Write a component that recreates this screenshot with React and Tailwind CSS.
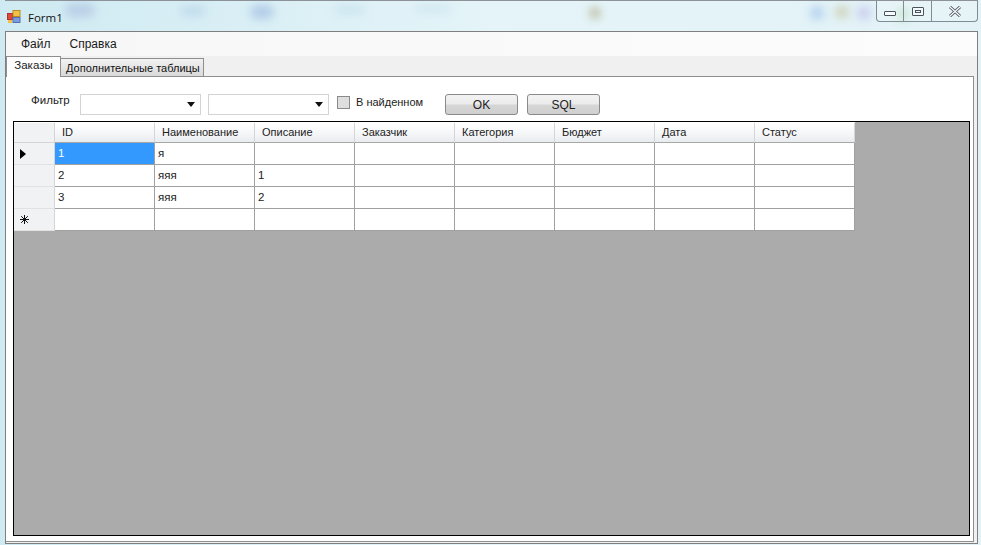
import React from "react";

const columns = ["ID", "Наименование", "Описание", "Заказчик", "Категория", "Бюджет", "Дата", "Статус"];

const rows = [
  { marker: "arrow", cells: ["1", "я", "", "", "", "", "", ""] },
  { marker: "", cells: ["2", "яяя", "1", "", "", "", "", ""] },
  { marker: "", cells: ["3", "яяя", "2", "", "", "", "", ""] },
  { marker: "star", cells: ["", "", "", "", "", "", "", ""] },
];

// Blurred desktop showing through the glass title bar
const blobs = [
  "left-[65px] top-[3px] w-[30px] h-[14px] bg-[#b4c8e4]",
  "left-[180px] top-[6px] w-[26px] h-[10px] bg-[#bcd6ea]",
  "left-[250px] top-[5px] w-[24px] h-[14px] bg-[#a9c4e6]",
  "left-[335px] top-[6px] w-[30px] h-[8px] bg-[#c6e0ee]",
  "left-[415px] top-[6px] w-[36px] h-[6px] bg-[#c6e0ee]",
  "left-[590px] top-[8px] w-[10px] h-[10px] bg-[#a89a70]",
  "left-[810px] top-[6px] w-[14px] h-[14px] bg-[#a9c8ee]",
  "left-[835px] top-[6px] w-[14px] h-[12px] bg-[#c8c8a8]",
  "left-[857px] top-[6px] w-[14px] h-[14px] bg-[#c4c4ee]",
  "left-[899px] top-[8px] w-[8px] h-[12px] bg-[#a4d4a0]",
];

const ComboBox = ({ className }) => (
  <div className={`h-[21px] w-[121px] border border-[#d4d4d4] bg-white flex items-center justify-end pr-[5px] ${className}`}>
    <svg width="8" height="5" viewBox="0 0 8 5">
      <path d="M0 0h8L4 5z" fill="#111" />
    </svg>
  </div>
);

const Button = ({ label, className }) => (
  <div className={`h-[21px] w-[73px] rounded-[3px] border border-[#8a8a8a] bg-[linear-gradient(#f3f3f3_0%,#ebebeb_48%,#d6d6d6_52%,#cfcfcf_100%)] flex items-center justify-center text-[12px] text-[#222] ${className}`}>
    {label}
  </div>
);

const RowMarker = ({ type }) => {
  if (type === "arrow") {
    return (
      <svg width="6" height="10" viewBox="0 0 6 10">
        <path d="M0 0l6 5-6 5z" fill="#000" />
      </svg>
    );
  }
  if (type === "star") {
    return (
      <svg width="9" height="9" viewBox="0 0 9 9" stroke="#111" strokeWidth="1">
        <path d="M4.5 0v9M0 4.5h9M1.2 1.2l6.6 6.6M7.8 1.2L1.2 7.8" />
      </svg>
    );
  }
  return null;
};

const App = () => {
  return (
    <div className="relative w-[981px] h-[545px] overflow-hidden flex flex-col pl-[5px] pr-[3px] bg-[linear-gradient(90deg,#cfeaf2,#e4f4f8_50%,#e2f2f6)] font-['Liberation_Sans',sans-serif] text-[11px] text-[#222]">
      {blobs.map((b) => (
        <div key={b} className={`absolute rounded-full blur-[5px] opacity-80 ${b}`} />
      ))}

      {/* Title bar */}
      <div className="relative h-[31px] shrink-0 flex items-start border-t border-[#8d9298]">
        <svg className="mt-[9px] ml-[2px]" width="14" height="14" viewBox="0 0 14 14">
          <rect x="0.5" y="3.5" width="5" height="6" fill="#e2473a" stroke="#a33" />
          <rect x="6" y="0.5" width="7" height="6" fill="#f2c14a" stroke="#b88a20" />
          <rect x="6" y="7.5" width="7" height="5" fill="#7c9ce0" stroke="#5570b0" />
          <rect x="1" y="10" width="4" height="3" fill="#f2c14a" />
        </svg>
        <span className="ml-[7px] mt-[9px] text-[11.5px] leading-[16px] font-['Open_Sans',sans-serif] text-[#111]">Form1</span>

        {/* Caption buttons */}
        <div className="ml-auto flex h-[21px] w-[102px] rounded-b-[4px] border border-t-0 border-[#7f8b95] bg-white/20">
          <div className="w-[27px] border-r border-[#7f8b95] flex items-center justify-center">
            <div className="mt-[4px] h-[5px] w-[12px] border border-[#49535c] bg-white/70 rounded-[1px]" />
          </div>
          <div className="w-[28px] border-r border-[#7f8b95] flex items-center justify-center">
            <div className="h-[9px] w-[12px] border border-[#49535c] bg-white/50 rounded-[1px] flex items-center justify-center">
              <div className="h-[3px] w-[6px] border border-[#49535c]" />
            </div>
          </div>
          <div className="flex-1 flex items-center justify-center">
            <svg width="12" height="11" viewBox="0 0 12 11">
              <path d="M1 1l10 9M11 1L1 10" stroke="#49535c" strokeWidth="3" />
              <path d="M1 1l10 9M11 1L1 10" stroke="#fff" strokeWidth="1.2" />
            </svg>
          </div>
        </div>
      </div>

      {/* Client area */}
      <div className="h-[513px] shrink-0 flex flex-col border border-[#7f7f7f] bg-[#f0f0f0]">
        {/* Menu */}
        <div className="h-[24px] shrink-0 flex items-center pl-[15px] gap-[19px] bg-[linear-gradient(90deg,#f7f7f7,#fcfcfc)] text-[12px] text-[#1a1a1a]">
          <span>Файл</span>
          <span>Справка</span>
        </div>

        {/* Tabs */}
        <div className="h-[21px] shrink-0 flex items-end relative z-10 mb-[-1px]">
          <div className="h-[21px] w-[55px] border border-b-0 border-[#8e8e8e] bg-white text-center leading-[17px] text-[11.5px] text-[#222]">Заказы</div>
          <div className="h-[19px] w-[143px] border border-l-0 border-[#8e8e8e] bg-[linear-gradient(#f2f2f2,#d9d9d9)] pl-[5px] leading-[18px] text-[11px] text-[#111] whitespace-nowrap">Дополнительные таблицы</div>
        </div>

        {/* Tab page */}
        <div className="flex-1 min-h-0 flex flex-col border-t border-r border-b border-[#8e8e8e] bg-white mb-[1px] mr-[3px]">
          {/* Filter bar */}
          <div className="h-[44px] shrink-0 flex items-start">
            <span className="ml-[25px] mt-[16px] text-[11.5px] leading-[14px] w-[49px]">Фильтр</span>
            <ComboBox className="mt-[17px]" />
            <ComboBox className="mt-[17px] ml-[7px]" />
            <div className="mt-[19px] ml-[8px] h-[13px] w-[13px] border border-[#8a8a8a] bg-[#dedede]" />
            <span className="mt-[18px] ml-[6px] w-[65px] text-[11px] leading-[14px] whitespace-nowrap">В найденном</span>
            <Button label="OK" className="mt-[17px] ml-[24px]" />
            <Button label="SQL" className="mt-[17px] ml-[9px]" />
          </div>

          {/* Data grid */}
          <div className="flex-1 min-h-0 ml-[7px] mr-[3px] mb-[5px] border border-black bg-[#ababab]">
            <div className="w-[841px] bg-white pt-[1px]">
              <div className="flex h-[20px]">
                <div className="w-[41px] shrink-0 border-r border-b border-[#d5d5d5] bg-[#f1f2f4]" />
                {columns.map((c) => (
                  <div key={c} className="w-[100px] shrink-0 border-r border-b border-r-[#d5d5d5] border-b-[#a8a8a8] bg-[linear-gradient(#ffffff,#f6f7f9_50%,#e9ecef)] pl-[7px] text-[11px] leading-[19px] text-[#222]">
                    {c}
                  </div>
                ))}
              </div>
              {rows.map((row, i) => (
                <div key={i} className="flex h-[22px]">
                  <div className="w-[41px] shrink-0 border-r border-b border-r-[#d5d5d5] border-b-[#e2e2e2] bg-[#f1f2f4] flex items-center pl-[6px]">
                    <RowMarker type={row.marker} />
                  </div>
                  {row.cells.map((cell, j) => (
                    <div
                      key={j}
                      className={`w-[100px] shrink-0 border-r border-b border-[#a0a0a0] pl-[3px] leading-[21px] text-[11.5px] ${
                        i === 0 && j === 0 ? "bg-[#3399ff] text-white" : "bg-white text-[#222]"
                      }`}
                    >
                      {cell}
                    </div>
                  ))}
                </div>
              ))}
            </div>
          </div>
        </div>
      </div>
    </div>
  );
};

export default App;
